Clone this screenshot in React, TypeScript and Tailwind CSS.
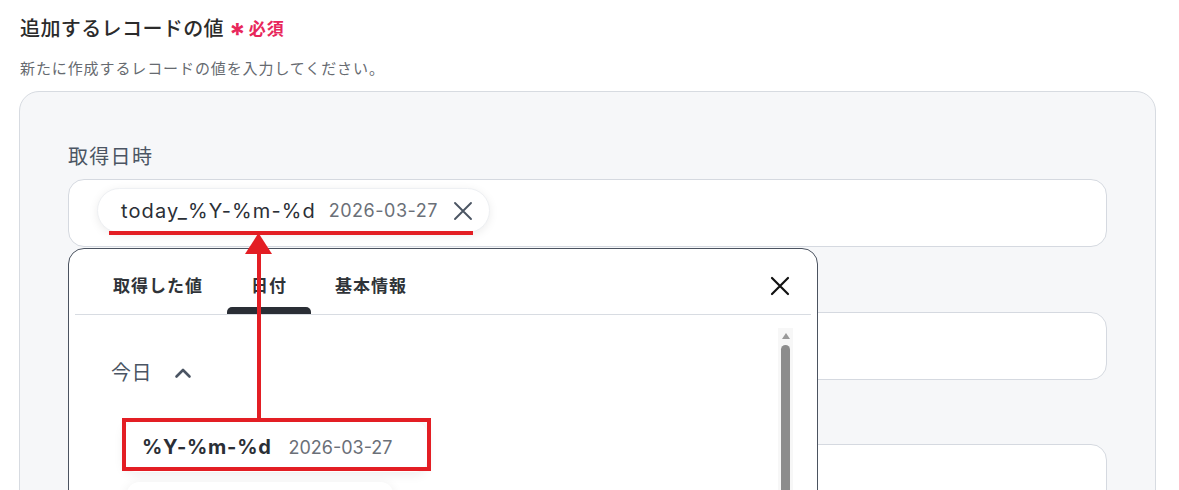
import React from "react";

const FONT = { fontFamily: 'Inter, "Noto Sans CJK JP", sans-serif' };

function XIcon({ size, color, sw }: { size: number; color: string; sw?: number }) {
  return (
    <svg width={size} height={size} viewBox="0 0 24 24" fill="none" stroke={color} strokeWidth={sw ?? 2} strokeLinecap="round">
      <path d="M4 4 L20 20 M20 4 L4 20" />
    </svg>
  );
}

export default function App() {
  return (
    <div className="relative w-[1179px] h-[490px] overflow-hidden bg-white" style={FONT}>
      <div className="pl-[20px] pt-[15px]">
        <div className="flex items-center h-[28px]">
          <span className="text-[20px] leading-[28px] font-medium text-[#2b2b2b] tracking-[0.4px]">追加するレコードの値</span>
          <span className="ml-[5px] text-[#e8275b] text-[30px] leading-[28px] font-bold mt-[10px]">*</span>
          <span className="ml-[3px] text-[#e8275b] text-[17px] leading-[28px] font-bold tracking-[1px]">必須</span>
        </div>
        <div className="mt-[15px] text-[15px] leading-[22px] text-[#666a70] tracking-[0.9px]">
          新たに作成するレコードの値を入力してください。
        </div>
      </div>

      <div className="ml-[19px] mt-[11px] w-[1137px] h-[420px] rounded-[20px] border border-[#d7dbe1] bg-[#f6f7f9] pl-[48px] pr-[48px] pt-[51px]">
        <div className="text-[20px] leading-[28px] text-[#4b5563] tracking-[1.3px]">取得日時</div>
        <div className="mt-[8px] h-[68px] rounded-[16px] border border-[#d5d9e0] bg-white pl-[28px] pt-[8px] flex items-start">
          <div className="h-[45px] rounded-full bg-white border border-[#eef0f3] shadow-[0_2px_10px_rgba(0,0,0,0.08)] flex items-center pl-[23px] pr-[14px]">
            <span className="text-[20px] text-[#2b2f36] tracking-[1.1px]">today_%Y-%m-%d</span>
            <span className="ml-[13px] text-[18px] text-[#6b7078] tracking-[0.5px]">2026-03-27</span>
            <span className="ml-[13px]">
              <XIcon size={24} color="#4b5563" sw={1.9} />
            </span>
          </div>
        </div>
        <div className="mt-[65px] h-[68px] rounded-[16px] border border-[#d5d9e0] bg-white" />
        <div className="mt-[64px] h-[68px] rounded-[16px] border border-[#d5d9e0] bg-white" />
      </div>

      {/* dropdown panel */}
      <div className="absolute left-[68px] top-[248px] w-[750px] h-[270px] rounded-[16px] border border-[#4b5360] bg-white">
        <div className="px-[6px]">
          <div className="relative flex h-[66px] border-b border-[#d8dce2] pl-[14px]">
            {[
              { t: "取得した値", a: false },
              { t: "日付", a: true },
              { t: "基本情報", a: false },
            ].map((tab) => (
              <div key={tab.t} className="relative h-full px-[24px] pt-[25px]">
                <span className="text-[17px] leading-[24px] font-semibold text-[#2f3338] tracking-[1px]">{tab.t}</span>
                {tab.a && <div className="absolute left-0 right-0 bottom-0 h-[7px] rounded-t-[5px] bg-[#2a2e35]" />}
              </div>
            ))}
            <div className="absolute right-[19px] top-[25px]">
              <XIcon size={24} color="#111" sw={2.2} />
            </div>
          </div>
          <div className="pl-[36px] pt-[44px]">
            <div className="flex items-center h-[28px]">
              <span className="text-[20px] leading-[28px] text-[#4b5563] tracking-[0.5px]">今日</span>
              <svg className="ml-[22px]" width="18" height="12" viewBox="0 0 18 12" fill="none" stroke="#4b5563" strokeWidth="2.6" strokeLinecap="round" strokeLinejoin="round">
                <path d="M2.5 9.5 L9 3 L15.5 9.5" />
              </svg>
            </div>
            <div className="ml-[13px] mt-[35px] w-[303px] h-[50px] rounded-[12px] bg-white shadow-[0_2px_12px_rgba(0,0,0,0.08)] flex items-center pl-[18px]">
              <span className="text-[20px] font-bold text-[#2b2f36] tracking-[0.7px]">%Y-%m-%d</span>
              <span className="ml-[17px] text-[18px] text-[#6b7078] tracking-[0px]">2026-03-27</span>
            </div>
            <div className="ml-[16px] mt-[10px] w-[266px] h-[50px] rounded-[12px] bg-white shadow-[0_2px_12px_rgba(0,0,0,0.08)]" />
          </div>
        </div>
        {/* scrollbar */}
        <div className="absolute right-[24px] top-[79px] w-[15px] h-[200px] bg-[#f7f7f7] flex flex-col items-center">
          <svg className="mt-[5px]" width="8" height="6" viewBox="0 0 8 6">
            <path d="M4 0 L8 6 L0 6 Z" fill="#9a9a9a" />
          </svg>
          <div className="mt-[6px] w-[9px] flex-1 rounded-t-full bg-[#8c8c8c]" />
        </div>
      </div>

      {/* annotations */}
      <svg className="absolute inset-0 pointer-events-none" width="1179" height="490">
        <rect x="109" y="231" width="364" height="4" fill="#e31e24" />
        <rect x="257" y="252" width="4" height="168" fill="#e31e24" />
        <polygon points="245,254 272,254 258.5,233" fill="#e31e24" />
        <rect x="124" y="420" width="305" height="49" fill="none" stroke="#e31e24" strokeWidth="4" />
      </svg>
    </div>
  );
}
